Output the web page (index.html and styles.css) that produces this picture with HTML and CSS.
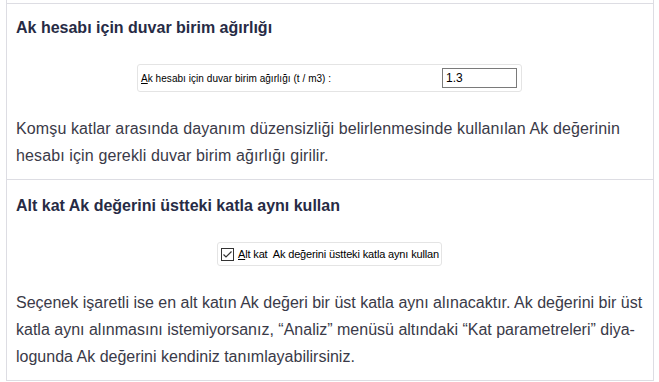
FILE: index.html
```html
<!DOCTYPE html>
<html>
<head>
    <title>Ak hesabı</title>
    <link rel="stylesheet" href="styles.css">
</head>
<body>
    <div class="doc">
        <div class="prev"></div>

        <div class="section">
            <h2>Ak hesabı için duvar birim ağırlığı</h2>
            <div class="shot">
                <div class="dlg dlg-input">
                    <span class="lbl"><u>A</u>k hesabı için duvar birim ağırlığı (t / m3) :</span>
                    <span class="field">1.3</span>
                </div>
            </div>
            <p class="wide">Komşu katlar arasında dayanım düzensizliği belirlenmesinde kullanılan Ak değerinin<br>hesabı için gerekli duvar birim ağırlığı girilir.</p>
        </div>

        <div class="section">
            <h2>Alt kat Ak değerini üstteki katla aynı kullan</h2>
            <div class="shot">
                <div class="dlg dlg-check">
                    <span class="box">
                        <svg width="13" height="13" viewBox="0 0 13 13">
                            <rect x="0.5" y="0.5" width="12" height="12" fill="#fff" stroke="#333"/>
                            <path d="M2.5 6.5 L5 9 L10.5 3.5" fill="none" stroke="#333" stroke-width="1.2"/>
                        </svg>
                    </span>
                    <span class="lbl"><u>A</u>lt kat&nbsp; Ak değerini üstteki katla aynı kullan</span>
                </div>
            </div>
            <p>Seçenek işaretli ise en alt katın Ak değeri bir üst katla aynı alınacaktır. Ak değerini bir üst<br>katla aynı alınmasını istemiyorsanız, “Analiz” menüsü altındaki “Kat parametreleri” diya-<br>logunda Ak değerini kendiniz tanımlayabilirsiniz.</p>
        </div>
    </div>
</body>
</html>
```

FILE: styles.css
```css
body {
    margin: 0;
    background: #fff;
    font-family: "Liberation Sans", Arial, sans-serif;
}
.doc {
    margin-left: 6px;
    width: 646px;
    border-left: 1px solid #dddde3;
    border-right: 1px solid #dddde3;
}
.prev {
    height: 3px;
    border-bottom: 1px solid #dddde3;
}
.section {
    padding: 14px 2px 10px 9px;
    border-bottom: 1px solid #dddde3;
}
.section + .section {
    padding-top: 16px;
}
h2 {
    margin: 0;
    font-size: 16px;
    line-height: 20px;
    font-weight: bold;
    color: #272b45;
}
.shot {
    display: flex;
    justify-content: center;
    margin: 26px 0 23px;
    padding-right: 8px;
}
.dlg {
    display: flex;
    align-items: center;
    border: 1px solid #e4e4e4;
    border-radius: 3px;
    background: #fff;
    font-size: 11px;
    color: #000;
}
.dlg-input {
    width: 376px;
    height: 26px;
    padding: 0 4px 0 3px;
    justify-content: space-between;
}
.dlg-input .lbl {
    font-size: 10px;
    letter-spacing: 0.05px;
}
.field {
    width: 75px;
    height: 20px;
    border: 1px solid #7a7a7a;
    box-sizing: border-box;
    padding: 2px 3px;
    line-height: 14px;
    font-size: 12px;
}
.dlg-check {
    height: 22px;
    padding: 0 2px 0 3px;
}
.dlg-check .lbl {
    letter-spacing: -0.15px;
}
.box {
    display: flex;
    margin-right: 4px;
}
p {
    margin: 0;
    font-size: 16px;
    line-height: 27px;
    white-space: nowrap;
    color: #3a3a48;
}
p.wide {
    letter-spacing: 0.12px;
}
```
